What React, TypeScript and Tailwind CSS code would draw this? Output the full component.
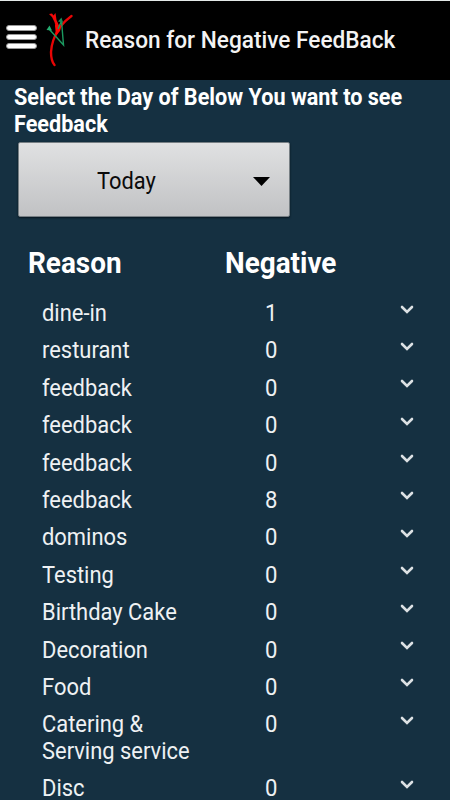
const reasons = [
  { name: "dine-in", count: 1 },
  { name: "resturant", count: 0 },
  { name: "feedback", count: 0 },
  { name: "feedback", count: 0 },
  { name: "feedback", count: 0 },
  { name: "feedback", count: 8 },
  { name: "dominos", count: 0 },
  { name: "Testing", count: 0 },
  { name: "Birthday Cake", count: 0 },
  { name: "Decoration", count: 0 },
  { name: "Food", count: 0 },
  { name: "Catering & Serving service", count: 0 },
  { name: "Disc", count: 0 },
];

function Logo() {
  return (
    <svg
      className="overflow-visible"
      width="28"
      height="56"
      viewBox="0 0 28 56"
      fill="none"
    >
      <path
        d="M2 2 L5 1.500 L6.500 3.500 L8.500 1 L9.500 8 L12.500 14.500 L10 20 L7.500 10 L5 5Z"
        fill="#f40808"
      />
      <path
        d="M24.500 4 Q18 8.500 12 16 Q4.500 29 4 40 Q4 49 7.500 53"
        stroke="#e80505"
        strokeWidth="2.400"
        strokeLinecap="round"
      />
      <path d="M8 13 L14.500 14 L13 19 L9 24Z" fill="#ff0500" />
      <path
        d="M2 17 L16.500 33 L14.500 9 L11 17"
        stroke="#1b9a60"
        strokeWidth="1.400"
      />
      <path d="M-0.500 18 L2.500 13.500 L5 18.500Z" fill="#25ad70" />
      <path d="M11 9.500 L14.500 5.500 L16 10.500Z" fill="#168c58" />
    </svg>
  );
}

function Header() {
  return (
    <header className="flex h-20 shrink-0 items-start border-t border-[#e4e9e8] bg-black pl-1.5">
      <button
        aria-label="Menu"
        className="mt-[24px] flex w-[31px] flex-col gap-[3px]"
      >
        <span className="h-1.5 rounded-full border border-[#999] bg-white" />
        <span className="h-1.5 rounded-full border border-[#999] bg-white" />
        <span className="h-1.5 rounded-full border border-[#999] bg-white" />
      </button>
      <div className="mt-[11px] ml-[10px]">
        <Logo />
      </div>
      <h1 className="mt-[24.500px] ml-[9.500px] origin-left scale-x-[0.963] text-[23.500px] leading-[28px] font-medium whitespace-nowrap text-[#f3f3f3]">
        Reason for Negative FeedBack
      </h1>
    </header>
  );
}

function DaySelect() {
  return (
    <button className="mt-[5px] ml-[18px] flex h-[75px] w-[272px] shrink-0 items-center rounded-[2px] border border-[#777f84] bg-linear-to-b from-[#e0e1e2] to-[#c1c2c4] text-[#0b0b0b] shadow-[0_1px_2px_#07151e]">
      <span className="mt-[2px] mr-[-14px] ml-[78px] w-[170px] origin-left scale-x-[0.91] text-left text-[24px] leading-[28px]">
        Today
      </span>
      <svg className="mt-[4px]" width="17" height="9" viewBox="0 0 17 9">
        <path d="M0 0H17L8.500 9Z" fill="#000" />
      </svg>
    </button>
  );
}

export default function App() {
  return (
    <div className="flex h-[800px] w-[450px] flex-col overflow-hidden bg-[#153041] font-['Roboto',sans-serif] text-white">
      <Header />
      <p className="mt-[4px] ml-[14px] w-[435px] shrink-0 origin-left scale-x-[0.92] text-[23.500px] leading-[26.500px] font-bold">
        Select the Day of Below You want to see Feedback
      </p>
      <DaySelect />
      <div className="mt-[29px] flex shrink-0 pl-[28px] text-[29.500px] leading-[34px] font-bold">
        <span className="w-[197px] origin-left scale-x-[0.945]">Reason</span>
        <span className="origin-left scale-x-[0.945]">Negative</span>
      </div>
      <ul className="mt-[20px] shrink-0 text-[24px] leading-[26.500px] text-[#eef1f3]">
        {reasons.map((reason, i) => (
          <li key={i} className="flex items-start pb-[10.900px] pl-[42px]">
            <span className="w-[170px] origin-left scale-x-[0.913]">
              {reason.name}
            </span>
            <span className="ml-[53px] w-[134.500px] origin-left scale-x-[0.92]">
              {reason.count}
            </span>
            <svg
              className="mt-[4.500px]"
              width="14"
              height="10"
              viewBox="0 0 14 10"
              fill="none"
            >
              <path
                d="M2 2L7 7L12 2"
                stroke="#dce1e4"
                strokeWidth="2.600"
                strokeLinecap="round"
              />
            </svg>
          </li>
        ))}
      </ul>
    </div>
  );
}
